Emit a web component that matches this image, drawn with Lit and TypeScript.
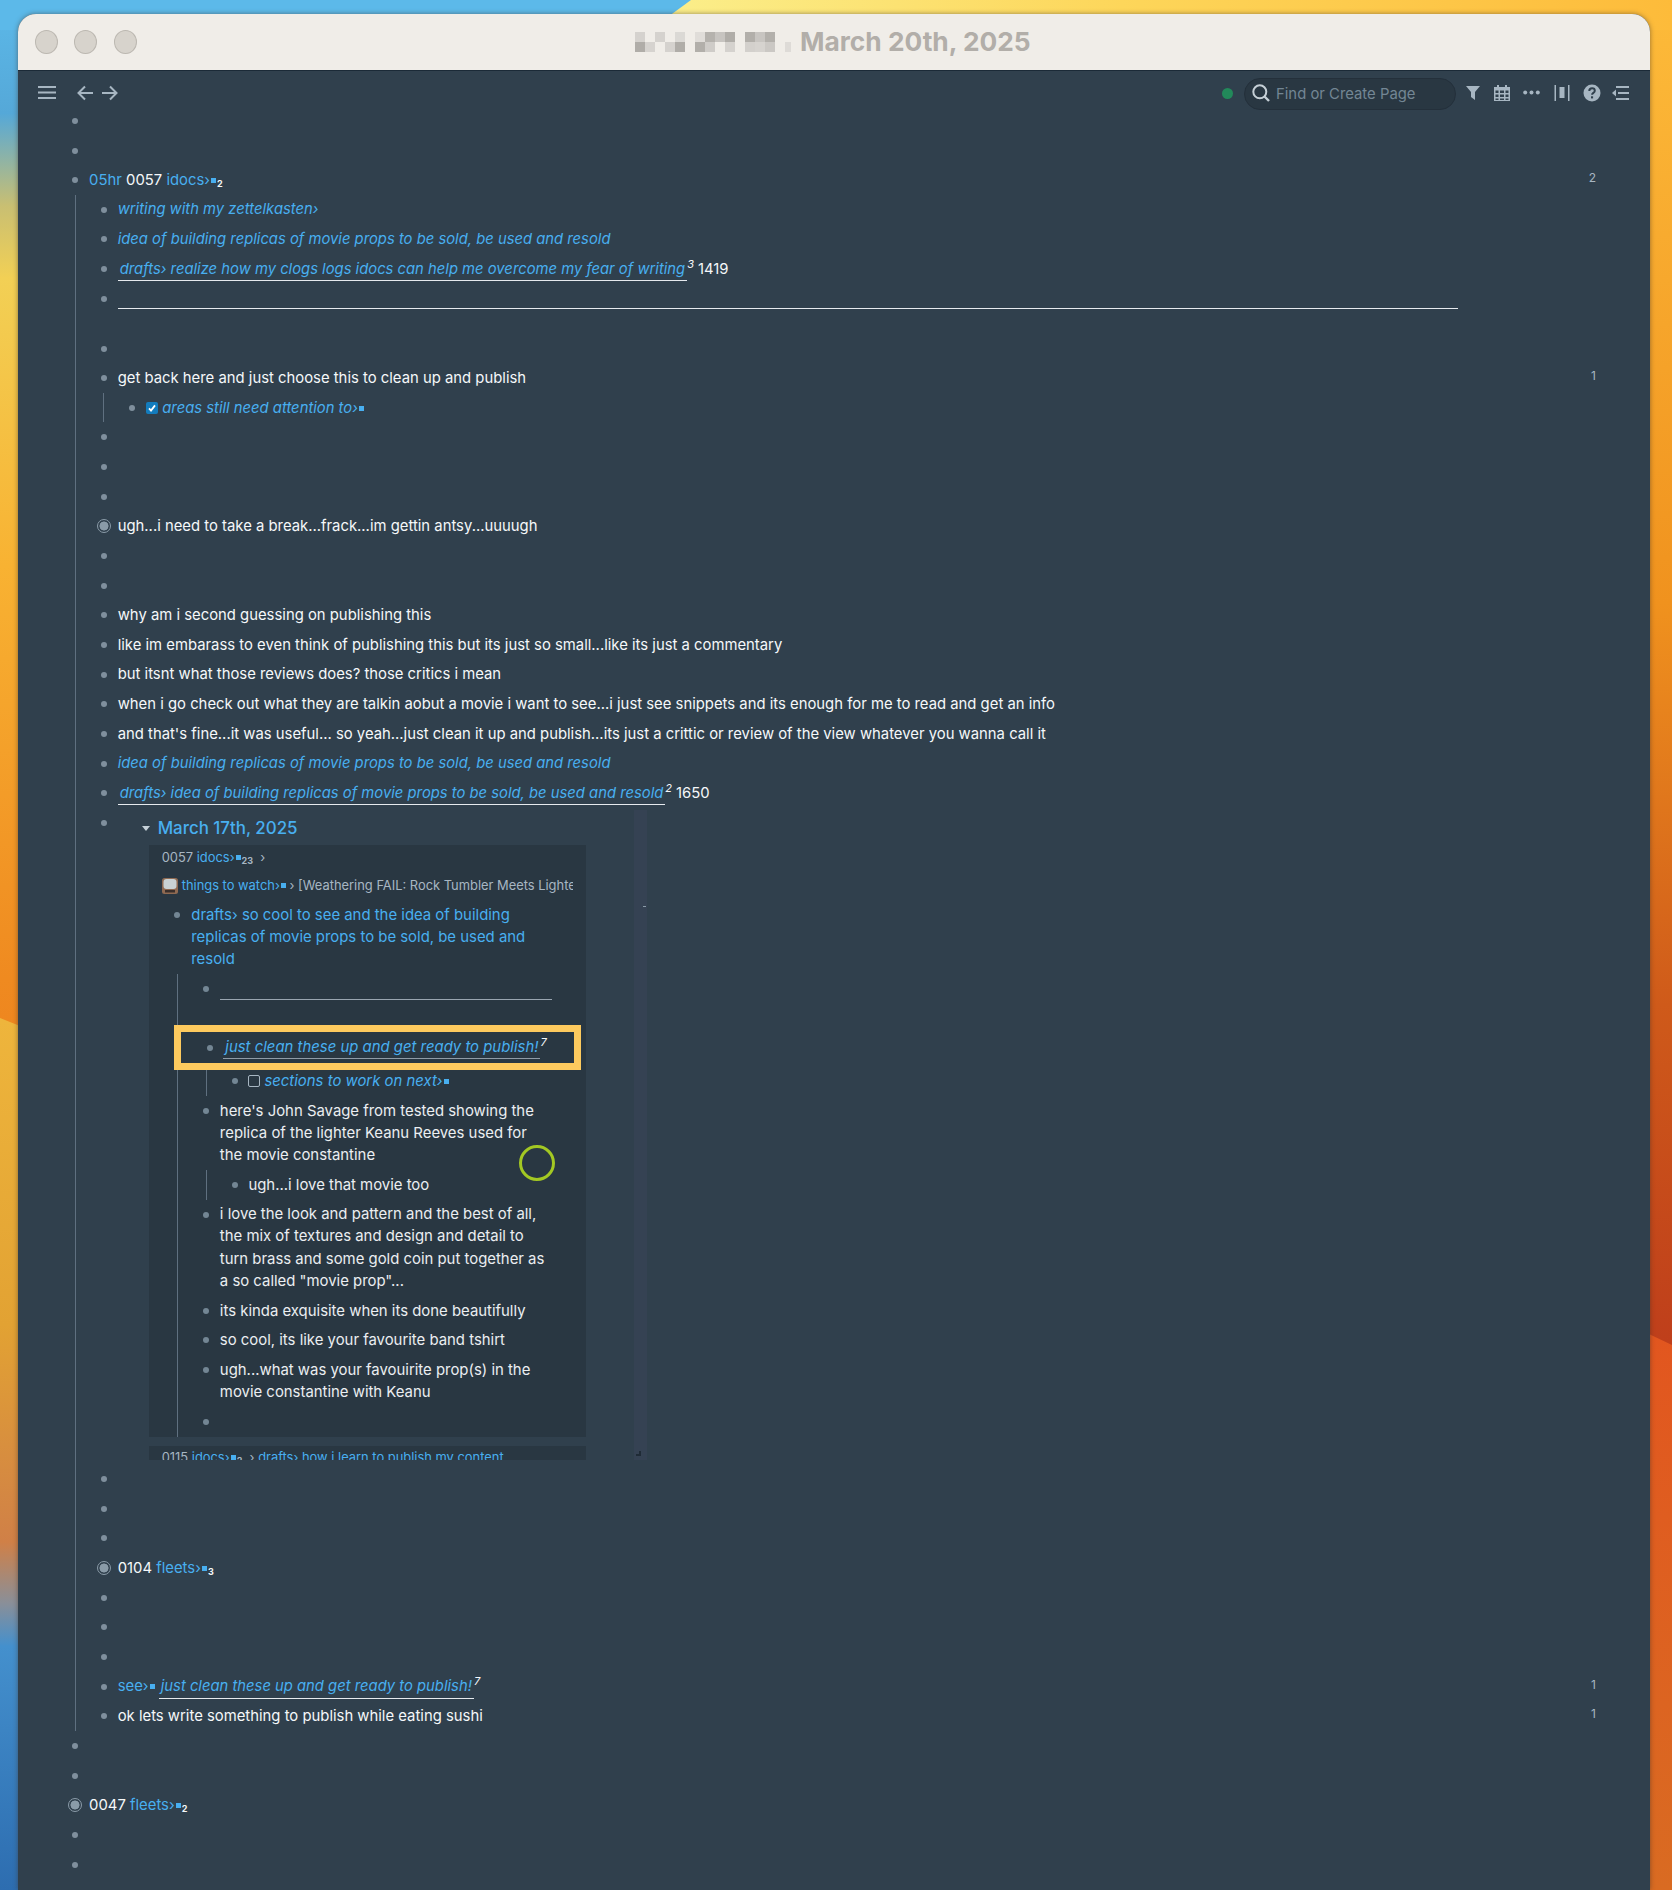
import { LitElement, html, css, svg, nothing } from "lit";
import { customElement } from "lit/decorators.js";

const TOP = ["#d5d2ce","","#d5d2ce","","#dbd9d5","","#e0ddd9","#b5b2ad","#c7c4c0","#b0ada8","","#b2afaa","#c8c5c1","#b3b0ab"];
const BOT = ["#b0ada8","#d6d3cf","","#d5d2ce","#b0ada8","","#b2afaa","#cfccc8","","#d5d2ce","","#d3d0cc","#d6d3cf","#cbc8c4"];

const sq = html`<span class="sq"></span>`;
const arrow = html`<span class="ch">›</span>`;
const tag = (t: string, n?: string) => html`<span class="link">${t}${arrow}${sq}${n ? html`<span class="sub">${n}</span>` : nothing}</span>`;

type Opts = { kids?: unknown; ring?: boolean; count?: string; cls?: string };
const row = (content: unknown, o: Opts = {}) => html`
  <div class="block ${o.cls ?? ""}">
    <div class="row">
      <div class="gutter"><span class="${o.ring ? "ring" : "dot"}"></span></div>
      <div class="text">${content}</div>
      ${o.count ? html`<div class="count">${o.count}</div>` : nothing}
    </div>
    ${o.kids ? html`<div class="kids">${o.kids}</div>` : nothing}
  </div>`;
const ref = (t: unknown, n: string) => html`<span class="ref"><span class="link it">${t}</span></span><sup>${n}</sup>`;
const blank = () => row("");

@customElement("app-root")
export class AppRoot extends LitElement {
  static styles = css`
    :host { display: block; position: relative; width: 1672px; height: 1890px; overflow: hidden;
      font-family: Inter, "Noto Sans", sans-serif; font-size: 14.85px; line-height: 22.2px; color: #f5f8fa; }
    .wall { position: absolute; left: 0; top: 0; }
    .win { position: relative; margin: 14px 22px 0 18px; height: 1876px; background: #30404d; border-radius: 18px 18px 0 0;
      box-shadow: 0 0 5px rgba(60,50,40,.55); overflow: hidden; }
    .title { height: 57px; background: #f0ede8; border-bottom: 1px solid #1b2a37; box-sizing: border-box; display: flex; align-items: center; position: relative; }
    .lights { display: flex; gap: 16.5px; padding-left: 16.5px; }
    .lights i { width: 23px; height: 24px; border-radius: 50%; background: #d7d3cc; border: 1px solid #bcb8b1; box-sizing: border-box; }
    .name { position: absolute; left: 617px; top: 15px; display: flex; align-items: center; }
    .px { display: grid; grid-template-columns: repeat(14, 10px); grid-auto-rows: 10px; }
    .tiny { width: 6px; height: 10px; background: #dedbd7; margin: 10px 9px 0 10px; }
    .name b { font-size: 26.3px; line-height: 26px; font-weight: 700; color: #b2aea9; }
    .bar { height: 35px; position: relative; color: #a7b6c2; }
    .bar svg { position: absolute; display: block; }
    .green { position: absolute; left: 1204px; top: 16.5px; width: 11px; height: 11px; background: #22895a; border-radius: 50%; }
    .search { position: absolute; left: 1226px; top: 7px; width: 212px; height: 32px; box-sizing: border-box; border-radius: 16px; background: #293742; border: 1px solid #24303b;
      color: #738694; font-size: 14.85px; line-height: 30px; padding-left: 31px; }
    .content { padding: 0 54px 0 42.5px; }
    .content > .block > .kids { margin-top: -0.3px; margin-bottom: 0; }
    .block { position: relative; }
    .row { display: flex; position: relative; }
    .gutter { width: 28.6px; flex: none; height: 29.65px; position: relative; }
    .dot { position: absolute; left: 11.8px; top: 12px; width: 6px; height: 6px; border-radius: 50%; background: #7f8f9d; }
    .ring { position: absolute; left: 7.8px; top: 8px; width: 14px; height: 14px; box-sizing: border-box; border-radius: 50%; border: 1px solid #8a9ba8; background: radial-gradient(circle, #8a9ba8 4.2px, transparent 4.8px); }
    .text { flex: 1; min-width: 0; padding: 3.72px 0; min-height: 22.2px; }
    .count { width: 12px; flex: none; text-align: right; font-size: 12px; padding-top: 2px; color: #a7b6c2; }
    .kids { margin-left: 14.4px; padding-left: 13.2px; border-left: 1px solid #5f7080; }
    .link { color: #48aff0; }
    .it { font-style: italic; font-size: 14.8px; }
    .sq { display: inline-block; width: 5px; height: 5px; background: #48aff0; vertical-align: 2px; margin-left: 1px; }
    .sub { color: #f5f8fa; font-size: 9px; font-weight: 700; vertical-align: -2px; margin-left: 1px; line-height: 1; }
    .ref { display: inline-block; vertical-align: top; padding: 0 2px; border-bottom: 1px solid #e6eaee; line-height: 22.2px; height: 22.2px; box-sizing: content-box; margin-bottom: -1px; position: relative; }
    sup { font-size: 11px; font-style: italic; color: #f5f8fa; line-height: 0; vertical-align: 6px; }
    .after { margin-left: 4px; }
    .hr { height: 50px; }
    .hrline { width: 1340px; height: 1px; background: #e6eaee; margin-top: 20.3px; }
    .cb { display: inline-block; width: 12px; height: 12px; border-radius: 2px; box-sizing: border-box; vertical-align: -1px; margin-right: 4px; position: relative; }
    .cb.on { background: #137cbd; }
    .cb.off { border: 1px solid #a7b6c2; }
    .cb svg { position: absolute; left: 1px; top: 1px; }
    .embedwrap { height: 652.4px; margin-bottom: 4px; position: relative; overflow: hidden; width: 520px; }
    .pagetitle { height: 37.4px; box-sizing: border-box; padding-top: 7px; font-size: 16.9px; font-weight: 500; line-height: 26px; color: #48aff0; padding-left: 40px; position: relative; }
    .tri { position: absolute; left: 24.500px; top: 18px; width: 0; height: 0; border-left: 4.5px solid transparent; border-right: 4.5px solid transparent; border-top: 5.5px solid #c5d0d8; }
    .panel { background: #293742; margin-left: 31.5px; width: 436.6px; box-sizing: border-box; padding: 0 36.6px 0 13.5px; margin-bottom: 9px; color: #ebeef1; font-size: 14.9px; }
    .panel .dot { background: #738694; }
    .crumb { font-size: 12.9px; line-height: 18px; color: #a7b6c2; white-space: nowrap; overflow: hidden; display: flex; align-items: center; margin-left: -1px; }
    .crumb .sub { color: #a7b6c2; }
    .crumb .gap { white-space: pre; }
    .c1 { height: 26px; }
    .c2 { height: 29px; width: 411px; }
    .c3 { height: 24px; }
    .tv { flex: none; margin-right: 4px; }
    .ehr { height: 50px; }
    .ehrline { width: 332px; height: 1px; background: #99a5b0; margin-top: 21.3px; }
    .panel sup { color: #f5f8fa; }
    .panel .it { font-size: 14.9px; }
    .panel .ref { border-bottom-color: #8f9ba6; }
    .hl > .row { height: 42px; }
    .hl > .row > .gutter { margin-top: 8.3px; margin-left: 3.5px; }
    .hl > .row > .text { padding-top: 12px; padding-bottom: 0; }
    .box { position: absolute; left: -17.1px; top: 1px; width: 407px; height: 45px; box-sizing: border-box; border: 7px solid #fdca5e; pointer-events: none; }
    .cursor { position: absolute; left: 501px; top: 1131px; width: 36px; height: 36px; box-sizing: border-box; border-radius: 50%; border: 3px solid #a3c823; }
    .scroll { position: absolute; left: 616px; top: 796px; width: 13px; height: 650px; background: #354253; }
    .grip { position: absolute; left: 618px; top: 1437px; width: 5px; height: 5px; border-right: 2px solid #1f2b36; border-bottom: 2px solid #1f2b36; box-sizing: border-box; }
    .tick { position: absolute; left: 625px; top: 892px; width: 3px; height: 1px; background: #8a9ba8; }
  `;

  private wall() {
    return svg`<svg class="wall" width="1672" height="1890" viewBox="0 0 1672 1890">
      <defs>
        <linearGradient id="l1" x1="0" y1="0" x2="0" y2="1030" gradientUnits="userSpaceOnUse">
          <stop offset="0" stop-color="#5cb9e9"/><stop offset=".11" stop-color="#55a8d8"/><stop offset=".2" stop-color="#c9bf72"/><stop offset=".27" stop-color="#f2d055"/><stop offset=".55" stop-color="#f8b232"/><stop offset=".95" stop-color="#ef8a20"/><stop offset="1" stop-color="#ee861f"/>
        </linearGradient>
        <linearGradient id="l2" x1="0" y1="1020" x2="0" y2="1890" gradientUnits="userSpaceOnUse">
          <stop offset="0" stop-color="#eeb53c"/><stop offset=".35" stop-color="#e2a233"/><stop offset=".6" stop-color="#d08047"/><stop offset=".67" stop-color="#8a8f98"/><stop offset=".72" stop-color="#4490cd"/><stop offset="1" stop-color="#2d6db0"/>
        </linearGradient>
        <linearGradient id="r1" x1="0" y1="0" x2="0" y2="1340" gradientUnits="userSpaceOnUse">
          <stop offset="0" stop-color="#fdbb3a"/><stop offset=".45" stop-color="#f0921e"/><stop offset=".75" stop-color="#cf5a1a"/><stop offset="1" stop-color="#bf3f1b"/>
        </linearGradient>
        <linearGradient id="r2" x1="0" y1="1330" x2="0" y2="1890" gradientUnits="userSpaceOnUse">
          <stop offset="0" stop-color="#e2561f"/><stop offset="1" stop-color="#d96b22"/>
        </linearGradient>
        <linearGradient id="t1" x1="672" y1="0" x2="1672" y2="0" gradientUnits="userSpaceOnUse">
          <stop offset="0" stop-color="#fbee8a"/><stop offset=".45" stop-color="#fdd65a"/><stop offset="1" stop-color="#fdbb3a"/>
        </linearGradient>
      </defs>
      <rect width="30" height="1890" fill="url(#l1)"/>
      <polygon points="0,1018 30,1030 30,1890 0,1890" fill="url(#l2)"/>
      <rect x="1630" width="42" height="1890" fill="url(#r1)"/>
      <polygon points="1630,1325 1672,1345 1672,1890 1630,1890" fill="url(#r2)"/>
      <rect width="700" height="30" fill="#5cb9e9"/>
      <polygon points="691,0 1672,0 1672,30 650,30" fill="url(#t1)"/>
    </svg>`;
  }

  private tv() {
    return svg`<svg class="tv" width="16" height="18" viewBox="0 0 16 18">
      <rect x="0" y="1" width="16" height="16" rx="2.5" fill="#8f6a52"/>
      <rect x="1.5" y="2" width="13" height="10" rx="3" fill="#c9d2d4"/>
      <rect x="3" y="13" width="10" height="2.5" fill="#3a2f2b"/>
    </svg>`;
  }

  private embed() {
    const k2 = [
      html`<div class="ehr block"><div class="row"><div class="gutter"><span class="dot"></span></div><div class="text"><div class="ehrline"></div></div></div></div>`,
      html`<div class="block hl">
        <div class="box"></div>
        <div class="row"><div class="gutter"><span class="dot"></span></div><div class="text">${ref("just clean these up and get ready to publish!", "7")}</div></div>
        <div class="kids">${row(html`<span class="cb off"></span><span class="link it">sections to work on next${arrow}${sq}</span>`)}</div>
      </div>`,
      row("here's John Savage from tested showing the replica of the lighter Keanu Reeves used for the movie constantine", { kids: row("ugh...i love that movie too") }),
      row(`i love the look and pattern and the best of all, the mix of textures and design and detail to turn brass and some gold coin put together as a so called "movie prop"...`),
      row("its kinda exquisite when its done beautifully"),
      row("so cool, its like your favourite band tshirt"),
      row("ugh...what was your favouirite prop(s) in the movie constantine with Keanu"),
      blank(),
    ];
    return html`<div class="embedwrap">
      <div class="pagetitle"><span class="tri"></span>March 17th, 2025</div>
      <div class="panel">
        <div class="crumb c1"><span>0057 ${tag("idocs", "23")}<span class="gap">  ›</span></span></div>
        <div class="crumb c2">${this.tv()}<span>${tag("things to watch")} › [Weathering FAIL: Rock Tumbler Meets Lighter</span></div>
        ${row(html`<span class="link">drafts${arrow} so cool to see and the idea of building replicas of movie props to be sold, be used and resold</span>`, { kids: k2 })}
      </div>
      <div class="panel">
        <div class="crumb c3"><span>0115 ${tag("idocs", "2")} <span class="gap"> › </span><span class="link">drafts${arrow} how i learn to publish my content</span></span></div>
      </div>
    </div>`;
  }

  render() {
    const k1a = html`
      ${row(html`<span class="link it">writing with my zettelkasten${arrow}</span>`)}
      ${row(html`<span class="link it">idea of building replicas of movie props to be sold, be used and resold</span>`)}
      ${row(html`${ref(html`drafts${arrow} realize how my clogs logs idocs can help me overcome my fear of writing`, "3")}<span class="after">1419</span>`)}
      <div class="hr block"><div class="row"><div class="gutter"><span class="dot"></span></div><div class="text"><div class="hrline"></div></div></div></div>
      ${blank()}
      ${row("get back here and just choose this to clean up and publish", { count: "1", kids: row(html`<span class="cb on"><svg width="10" height="10" viewBox="0 0 10 10"><path d="M2 5.4l2 2.2L8 2.4" fill="none" stroke="#fff" stroke-width="1.8"/></svg></span><span class="link it">areas still need attention to${arrow}${sq}</span>`) })}
      ${blank()}${blank()}${blank()}
      ${row("ugh...i need to take a break...frack...im gettin antsy...uuuugh", { ring: true })}
      ${blank()}${blank()}
      ${row("why am i second guessing on publishing this")}
      ${row("like im embarass to even think of publishing this but its just so small...like its just a commentary")}
      ${row("but itsnt what those reviews does? those critics i mean")}
      ${row("when i go check out what they are talkin aobut a movie i want to see...i just see snippets and its enough for me to read and get an info")}
      ${row("and that's fine...it was useful... so yeah...just clean it up and publish...its just a crittic or review of the view whatever you wanna call it")}
      ${row(html`<span class="link it">idea of building replicas of movie props to be sold, be used and resold</span>`)}
      ${row(html`${ref(html`drafts${arrow} idea of building replicas of movie props to be sold, be used and resold`, "2")}<span class="after">1650</span>`)}
      <div class="block"><div class="row"><div class="gutter"><span class="dot"></span></div><div class="text" style="padding:0">${this.embed()}</div></div></div>
      ${blank()}${blank()}${blank()}
      ${row(html`0104 ${tag("fleets", "3")}`, { ring: true })}
      ${blank()}${blank()}${blank()}
      ${row(html`<span class="link">see${arrow}${sq}</span> ${ref("just clean these up and get ready to publish!", "7")}`, { count: "1" })}
      ${row("ok lets write something to publish while eating sushi", { count: "1" })}
    `;
    return html`
      ${this.wall()}
      <div class="win">
        <div class="title">
          <div class="lights"><i></i><i></i><i></i></div>
          <div class="name">
            <div class="px">${[...TOP, ...BOT].map((c) => html`<span style="background:${c || "transparent"}"></span>`)}</div>
            <div class="tiny"></div>
            <b>March 20th, 2025</b>
          </div>
        </div>
        <div class="bar">
          <svg style="left:20px;top:14px" width="18" height="15" viewBox="0 0 18 15"><path d="M0 2h18M0 7.5h18M0 13h18" stroke="#a7b6c2" stroke-width="2"/></svg>
          <svg style="left:59px;top:14px" width="16" height="16" viewBox="0 0 16 16"><path d="M8 1.500L1.500 8 8 14.500M2 8h14" fill="none" stroke="#a7b6c2" stroke-width="2"/></svg>
          <svg style="left:84px;top:14px" width="16" height="16" viewBox="0 0 16 16"><path d="M8 1.500L14.500 8 8 14.500M14 8H0" fill="none" stroke="#a7b6c2" stroke-width="2"/></svg>
          <span class="green"></span>
          <div class="search">Find or Create Page</div>
          <svg style="left:1234px;top:13px" width="18" height="18" viewBox="0 0 18 18"><circle cx="7.800" cy="7.800" r="6.500" fill="none" stroke="#c5cfd6" stroke-width="2"/><path d="M12.500 12.500L17 17" stroke="#c5cfd6" stroke-width="2.400"/></svg>
          <svg style="left:1448px;top:15px" width="14" height="14" viewBox="0 0 14 14"><path d="M0 0h14L9 6v8L5 11V6z" fill="#a7b6c2"/></svg>
          <svg style="left:1476px;top:14px" width="16" height="16" viewBox="0 0 16 16"><path d="M0 2h3V0h2v2h6V0h2v2h3v14H0zM1.500 5.500v2.500h3V5.500zm4.500 0v2.500h4V5.500zm5.500 0v2.500h3V5.500zM1.500 9.500v2.500h3V9.500zm4.500 0v2.500h4V9.500zm5.500 0v2.500h3V9.500zM1.500 13.500V15h3v-1.500zm4.500 0V15h4v-1.500zm5.500 0V15h3v-1.500z" fill="#a7b6c2" fill-rule="evenodd"/></svg>
          <svg style="left:1505px;top:19px" width="17" height="5" viewBox="0 0 17 5"><circle cx="2.200" cy="2.500" r="2" fill="#a7b6c2"/><circle cx="8.500" cy="2.500" r="2" fill="#a7b6c2"/><circle cx="14.800" cy="2.500" r="2" fill="#a7b6c2"/></svg>
          <svg style="left:1536px;top:14px" width="16" height="16" viewBox="0 0 16 16"><path d="M.5 0h1.500v16H.5zM14 0h1.500v16H14zM5.500 2h5v11h-5z" fill="#a7b6c2"/></svg>
          <svg style="left:1565px;top:13px" width="18" height="18" viewBox="0 0 18 18"><circle cx="9" cy="9" r="8.500" fill="#a7b6c2"/><path d="M6.300 7c0-1.700 1.200-2.700 2.800-2.700s2.700 1 2.700 2.400c0 2.200-2.700 2.200-2.700 4" fill="none" stroke="#30404d" stroke-width="2"/><rect x="8" y="12.300" width="2.100" height="2.100" fill="#30404d"/></svg>
          <svg style="left:1594px;top:15px" width="17" height="14" viewBox="0 0 17 14"><path d="M4 1h13M6 7h11M4 13h13" stroke="#a7b6c2" stroke-width="2"/><path d="M0 7l4-3.500v7z" fill="#a7b6c2"/></svg>
        </div>
        <div class="content">
          ${blank()}${blank()}
          ${row(html`<span class="link">05hr</span> 0057 ${tag("idocs", "2")}`, { count: "2", kids: k1a })}
          ${blank()}${blank()}
          ${row(html`0047 ${tag("fleets", "2")}`, { ring: true })}
          ${blank()}${blank()}
        </div>
        <div class="scroll"></div>
        <div class="tick"></div>
        <div class="grip"></div>
        <div class="cursor"></div>
      </div>
    `;
  }
}
